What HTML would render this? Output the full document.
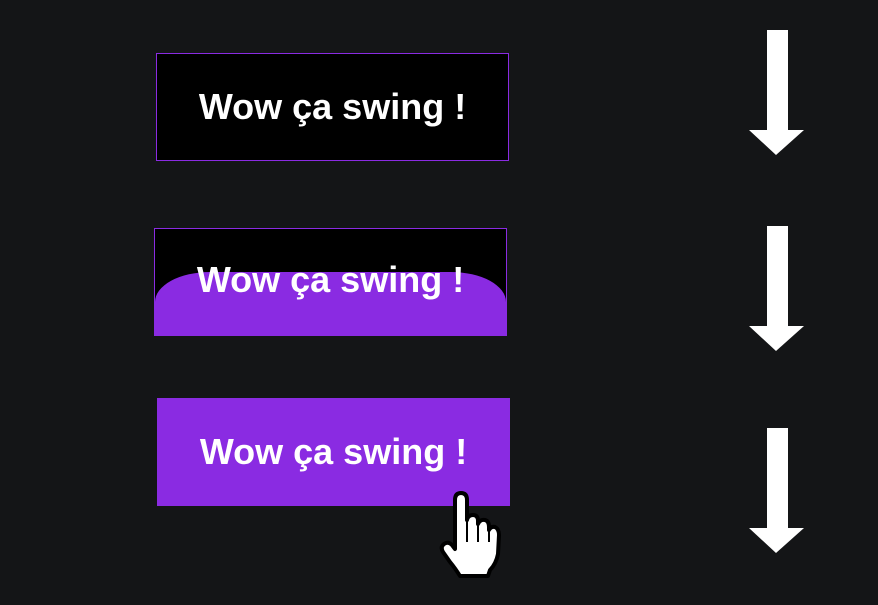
<html><head><style>
body{margin:0;width:878px;height:605px;background:#141517;position:relative;overflow:hidden;font-family:"Liberation Sans",sans-serif}
.b{position:absolute;width:351px;height:106px;border:1px solid #8a2be2;background:#000;color:#fff;font-weight:bold;font-size:36px;display:flex;align-items:center;justify-content:center;overflow:hidden;box-sizing:content-box}
.b span{position:relative}
.f{position:absolute;left:0;right:0;top:43px;bottom:0;background:#8a2be2;border-radius:55px 55px 0 0/30px 30px 0 0}
svg{position:absolute}
</style></head><body>
<div class="b" style="left:156px;top:53px"><span>Wow ça swing !</span></div>
<div class="b" style="left:154px;top:228px"><div class="f"></div><span style="top:-2px">Wow ça swing !</span></div>
<div class="b" style="left:157px;top:398px;background:#8a2be2"><span>Wow ça swing !</span></div>
<svg style="left:748px;top:30px" width="58" height="126"><polygon points="19,0 40,0 40,100 56,100 28,125 1,100 19,100" fill="#fff"/></svg>
<svg style="left:748px;top:226px" width="58" height="126"><polygon points="19,0 40,0 40,100 56,100 28,125 1,100 19,100" fill="#fff"/></svg>
<svg style="left:748px;top:428px" width="58" height="126"><polygon points="19,0 40,0 40,100 56,100 28,125 1,100 19,100" fill="#fff"/></svg>
<svg style="left:438px;top:490px" width="70" height="90" viewBox="0 0 70 90"><path d="M17,10 Q17,3 23,3 Q29,3 29,10 L29,30 Q30,25 35,25 Q40,25 40,31 L40,34 Q42,29 47,30 Q51,31 51,37 L51,40 Q53,36 57,37 Q61,39 61,45 L60,64 Q58,74 52,80 L50,86 L22,86 Q17,78 12,72 L5,62 Q2,57 6,54 Q10,51 14,55 L17,59 Z" fill="#fff" stroke="#000" stroke-width="4" stroke-linejoin="round"/><path d="M29,30 L29,52 M40,34 L40,52 M51,40 L51,52" stroke="#000" stroke-width="2"/></svg>
</body></html>
